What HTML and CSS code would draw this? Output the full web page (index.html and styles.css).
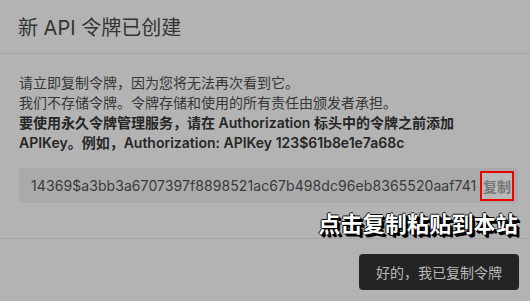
FILE: index.html
```html
<!DOCTYPE html>
<html lang="zh">
<head>
    <meta charset="UTF-8">
    <meta name="viewport" content="width=device-width, initial-scale=1.0">
    <title>新 API 令牌已创建</title>
    <link rel="stylesheet" href="styles.css">
</head>
<body>
    <div class="modal">
        <div class="modal-header">
            <h2>新 API 令牌已创建</h2>
        </div>

        <div class="modal-body">
            <p>请立即复制令牌，因为您将无法再次看到它。<br>
            我们不存储令牌。令牌存储和使用的所有责任由颁发者承担。<br>
            <strong>要使用永久令牌管理服务，请在 Authorization 标头中的令牌之前添加 APIKey。例如，Authorization: APIKey 123$61b8e1e7a68c</strong></p>

            <div class="token-box">
                <span class="token">14369$a3bb3a6707397f8898521ac67b498dc96eb8365520aaf741</span>
                <button class="copy-btn">复制</button>
            </div>

            <div class="hint">点击复制粘贴到本站</div>
        </div>

        <div class="modal-footer">
            <button class="btn">好的，我已复制令牌</button>
        </div>
    </div>
</body>
</html>
```

FILE: styles.css
```css
body {
    margin: 0;
    background-color: #b3b3b3;
    font-family: Inter, "Noto Sans CJK SC", sans-serif;
    color: #363636;
}

.modal {
    width: 530px;
}

.modal-header {
    height: 53px;
    padding: 0 18px;
    display: flex;
    align-items: center;
    border-bottom: 1px solid #a4a4a4;
}

.modal-header h2 {
    margin: 0;
    font-size: 20px;
    font-weight: 400;
    color: #333;
}

.modal-body {
    position: relative;
    padding: 19px 12px 35px 19px;
}

.modal-body p {
    margin: 0;
    font-size: 14px;
    line-height: 20px;
}

.modal-body strong {
    color: #262626;
    font-weight: 600;
}

.token-box {
    margin-top: 15px;
    height: 35px;
    display: flex;
    align-items: center;
    padding: 0 4px 0 12px;
    background-color: #aaaaaa;
    border-radius: 4px;
}

.token {
    flex: 1;
    white-space: nowrap;
    font-size: 14px;
    letter-spacing: 0.08px;
    color: #3a3a3a;
}

.copy-btn {
    height: 30px;
    width: 34px;
    padding: 0;
    border: 2px solid #ee0000;
    background-color: #b9b9b9;
    color: #777;
    font-family: inherit;
    font-size: 14px;
    font-weight: 600;
}

.hint {
    position: absolute;
    right: 12px;
    bottom: 0;
    font-size: 22px;
    font-weight: 700;
    color: #fff;
    letter-spacing: 0.2px;
    text-shadow: 1px 1px 0 #000, 2px 2px 0 #000, 3px 3px 0 #000, -1px 0 0 #000, 0 -1px 0 #000;
}

.modal-footer {
    border-top: 1px solid #a4a4a4;
    padding: 15px 11px;
    display: flex;
    justify-content: flex-end;
}

.btn {
    height: 36px;
    padding: 0 17px;
    background-color: #242424;
    color: #b8b8b8;
    border: none;
    border-radius: 4px;
    font-family: inherit;
    font-size: 14px;
}
```
